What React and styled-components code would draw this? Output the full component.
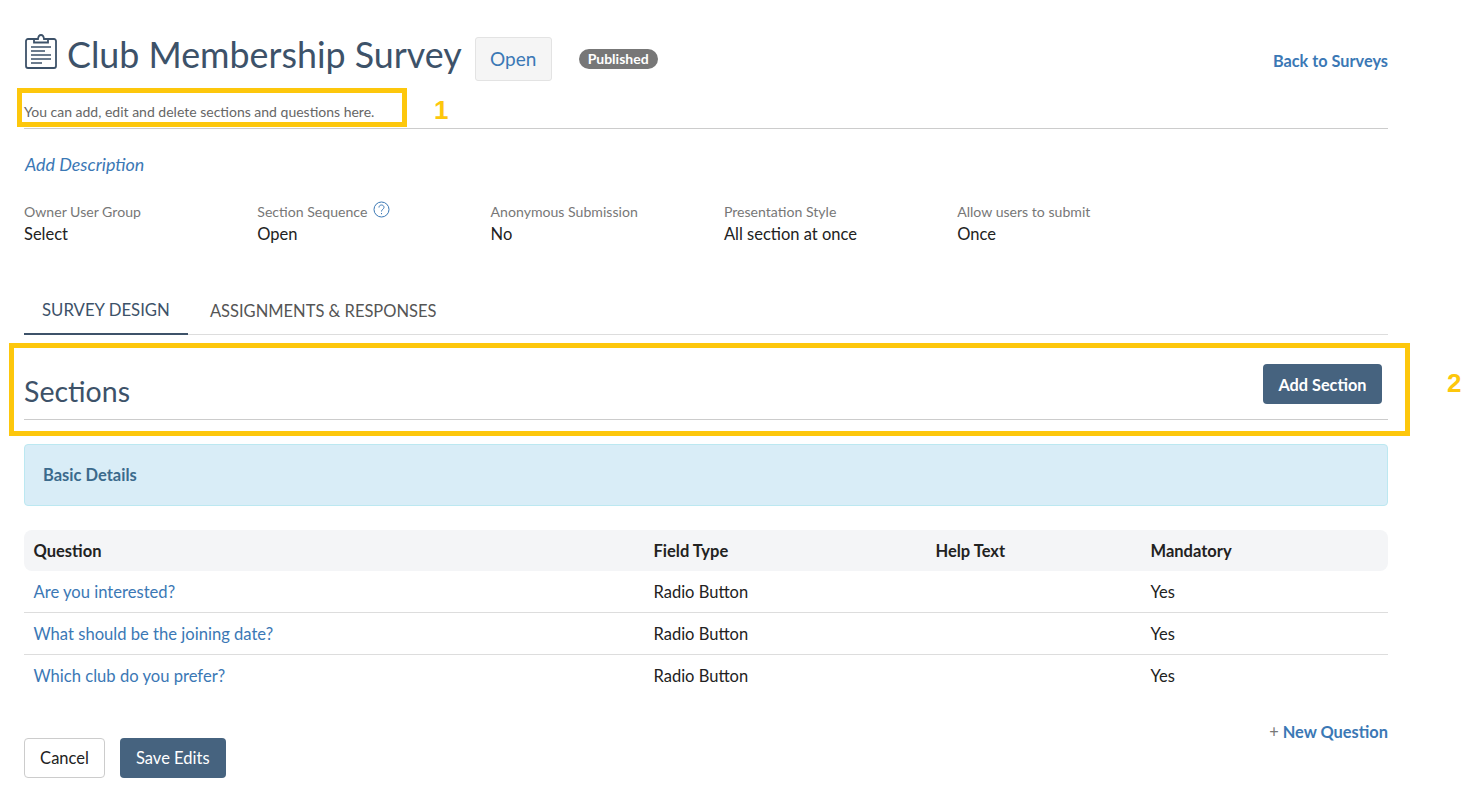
import React from "react";
import styled, { createGlobalStyle } from "styled-components";

const Global = createGlobalStyle`
  html, body { margin: 0; padding: 0; background: #fff; }
  body { font-family: Lato, "Open Sans", "Liberation Sans", sans-serif; color: #222; }
  * { box-sizing: border-box; }
`;

const Page = styled.div`
  position: relative;
  width: 1477px;
  height: 806px;
  overflow: hidden;
  padding: 27px 89px 0 24px;
`;
const Header = styled.div`
  display: flex;
  align-items: center;
  height: 54px;
`;
const TitleIcon = styled.svg`
  width: 34px;
  height: 36px;
  margin-right: 9px;
  margin-top: -6px;
  flex: none;
`;
const Title = styled.h1`
  margin: 2px 0 0;
  font-size: 35.8px;
  font-weight: 400;
  line-height: 54px;
  color: #3d5269;
`;
const StatusButton = styled.button`
  margin-left: 13px;
  margin-top: 9px;
  width: 77px;
  height: 44px;
  background: #f5f5f5;
  border: 1px solid #e3e3e3;
  border-radius: 3px;
  color: #3b78b5;
  font: 400 19px Lato, sans-serif;
`;
const Badge = styled.span`
  margin-left: 27px;
  margin-top: 10px;
  width: 79px;
  height: 20px;
  border-radius: 10px;
  background: #777;
  color: #fff;
  font-size: 14px;
  font-weight: 700;
  line-height: 20px;
  text-align: center;
`;
const BackLink = styled.a`
  margin-left: auto;
  margin-top: 12px;
  color: #3b78b5;
  font-size: 16.3px;
  font-weight: 700;
`;
const Subtitle = styled.div`
  height: 48px;
  padding-top: 23px;
  border-bottom: 1px solid #ccc;
  font-size: 14px;
  line-height: 16px;
  color: #666;
`;
const DescriptionLink = styled.a`
  display: block;
  margin: 25px 0 0 1px;
  font-size: 17.9px;
  font-style: italic;
  line-height: 20px;
  color: #3b78b5;
`;
const Meta = styled.div`
  display: grid;
  grid-template-columns: repeat(6, 233.3px);
  margin-top: 28px;
`;
const MetaLabel = styled.div`
  display: flex;
  align-items: center;
  gap: 6px;
  height: 18px;
  font-size: 14.1px;
  color: #777;
`;
const MetaValue = styled.div`
  margin-top: 3px;
  font-size: 16.5px;
  line-height: 22px;
  color: #222;
`;
const HelpIcon = styled.svg`
  width: 17px;
  height: 17px;
  margin-top: -4px;
`;
const Tabs = styled.div`
  display: flex;
  margin-top: 40px;
  height: 50px;
  border-bottom: 1px solid #ddd;
`;
const Tab = styled.div`
  padding: ${(p) => (p.$active ? "14px 18px 0" : "15px 22px 0")};
  font-size: ${(p) => (p.$active ? "16.75px" : "16.5px")};
  line-height: 22px;
  color: ${(p) => (p.$active ? "#3d5269" : "#555")};
  border-bottom: ${(p) => (p.$active ? "2px solid #3d5269" : "none")};
  margin-bottom: ${(p) => (p.$active ? "-1px" : "0")};
  height: 50px;
`;
const SectionsBar = styled.div`
  display: flex;
  justify-content: space-between;
  height: 85px;
  padding: 29px 6px 0 0;
  border-bottom: 1px solid #ccc;
`;
const SectionsTitle = styled.h2`
  margin: 9px 0 0;
  font-size: 28.5px;
  font-weight: 400;
  line-height: 36px;
  color: #3d5269;
`;
const PrimaryButton = styled.button`
  height: 40px;
  padding: 0 ${(p) => (p.$bold ? "15.5px" : "16px")};
  border: none;
  border-radius: 4px;
  background: #46637f;
  color: #fff;
  font: ${(p) => (p.$bold ? 700 : 400)} ${(p) => (p.$bold ? "16.3px" : "16.5px")} Lato, sans-serif;
`;
const Panel = styled.div`
  margin-top: 24px;
  height: 62px;
  padding: 0 18px;
  display: flex;
  align-items: center;
  background: #d9edf7;
  border: 1px solid #bce8f1;
  border-radius: 4px;
  color: #3b6a8c;
  font-size: 16.5px;
  font-weight: 700;
`;
const Table = styled.div`
  margin-top: 24px;
`;
const Row = styled.div`
  display: grid;
  grid-template-columns: 620px 282px 215px 1fr;
  align-items: center;
  height: ${(p) => (p.$head ? "41px" : "42px")};
  padding-left: 9.5px;
  font-size: 16.5px;
  font-weight: ${(p) => (p.$head ? 700 : 400)};
  color: #222;
  background: ${(p) => (p.$head ? "#f4f5f7" : "transparent")};
  border-radius: ${(p) => (p.$head ? "8px" : "0")};
  border-bottom: ${(p) => (p.$line ? "1px solid #ddd" : "none")};
`;
const QuestionLink = styled.a`
  color: #3b78b5;
  font-size: 16.6px;
`;
const NewQuestion = styled.div`
  margin-top: 24px;
  text-align: right;
  height: 17px;
  line-height: 22px;
  font-size: 16.4px;
  font-weight: 700;
  color: #3b78b5;
`;
const Plus = styled.span`
  font-weight: 400;
  color: #777;
`;
const Footer = styled.div`
  display: flex;
  gap: 15px;
`;
const CancelButton = styled.button`
  width: 81px;
  height: 40px;
  background: #fff;
  border: 1px solid #ccc;
  border-radius: 4px;
  color: #222;
  font: 400 16.5px Lato, sans-serif;
`;
const Callout = styled.div`
  position: absolute;
  left: ${(p) => p.$x}px;
  top: ${(p) => p.$y}px;
  width: ${(p) => p.$w}px;
  height: ${(p) => p.$h}px;
  border: 5px solid #fdc70c;
`;
const CalloutNumber = styled.div`
  position: absolute;
  left: ${(p) => p.$x}px;
  top: ${(p) => p.$y}px;
  font: 700 26px "Liberation Sans", sans-serif;
  line-height: 28px;
  color: #fdc70c;
`;

const metas = [
  ["Owner User Group", "Select"],
  ["Section Sequence", "Open", true],
  ["Anonymous Submission", "No"],
  ["Presentation Style", "All section at once"],
  ["Allow users to submit", "Once"],
];
const questions = ["Are you interested?", "What should be the joining date?", "Which club do you prefer?"];

export default function App() {
  return (
    <Page>
      <Global />
      <Header>
        <TitleIcon viewBox="0 0 34 36" fill="none" stroke="#3d5269" strokeWidth="1.8">
          <path d="M10 6H4a2 2 0 0 0-2 2v25a2 2 0 0 0 2 2h26a2 2 0 0 0 2-2V8a2 2 0 0 0-2-2h-6" />
          <path d="M10 9.500V6h4c.3-2.600 1.500-4 3-4s2.700 1.400 3 4h4v3.500z" />
          <path d="M7 14h20M7 18h14M7 22h20M7 26h20M7 30h11" strokeWidth="1.600" />
        </TitleIcon>
        <Title>Club Membership Survey</Title>
        <StatusButton>Open</StatusButton>
        <Badge>Published</Badge>
        <BackLink>Back to Surveys</BackLink>
      </Header>
      <Subtitle>You can add, edit and delete sections and questions here.</Subtitle>
      <DescriptionLink>Add Description</DescriptionLink>
      <Meta>
        {metas.map(([label, value, help]) => (
          <div key={label}>
            <MetaLabel>
              {label}
              {help && (
                <HelpIcon viewBox="0 0 17 17" fill="none" stroke="#3b78b5" strokeWidth="1">
                  <circle cx="8.500" cy="8.500" r="7.500" />
                  <path d="M6 6.500c0-1.500 1.100-2.500 2.500-2.500S11 5 11 6.300c0 1.900-2.500 2-2.500 4.200M8.500 12v1.200" />
                </HelpIcon>
              )}
            </MetaLabel>
            <MetaValue>{value}</MetaValue>
          </div>
        ))}
      </Meta>
      <Tabs>
        <Tab $active>SURVEY DESIGN</Tab>
        <Tab>ASSIGNMENTS &amp; RESPONSES</Tab>
      </Tabs>
      <SectionsBar>
        <SectionsTitle>Sections</SectionsTitle>
        <PrimaryButton $bold>Add Section</PrimaryButton>
      </SectionsBar>
      <Panel>Basic Details</Panel>
      <Table>
        <Row $head>
          <span>Question</span>
          <span>Field Type</span>
          <span>Help Text</span>
          <span>Mandatory</span>
        </Row>
        {questions.map((q, i) => (
          <Row key={q} $line={i < 2}>
            <QuestionLink>{q}</QuestionLink>
            <span>Radio Button</span>
            <span />
            <span>Yes</span>
          </Row>
        ))}
      </Table>
      <NewQuestion>
        <Plus>+</Plus> New Question
      </NewQuestion>
      <Footer>
        <CancelButton>Cancel</CancelButton>
        <PrimaryButton>Save Edits</PrimaryButton>
      </Footer>
      <Callout $x={17} $y={88} $w={390} $h={39} />
      <CalloutNumber $x={434} $y={96}>1</CalloutNumber>
      <Callout $x={9} $y={343} $w={1401} $h={93} />
      <CalloutNumber $x={1447} $y={369}>2</CalloutNumber>
    </Page>
  );
}
